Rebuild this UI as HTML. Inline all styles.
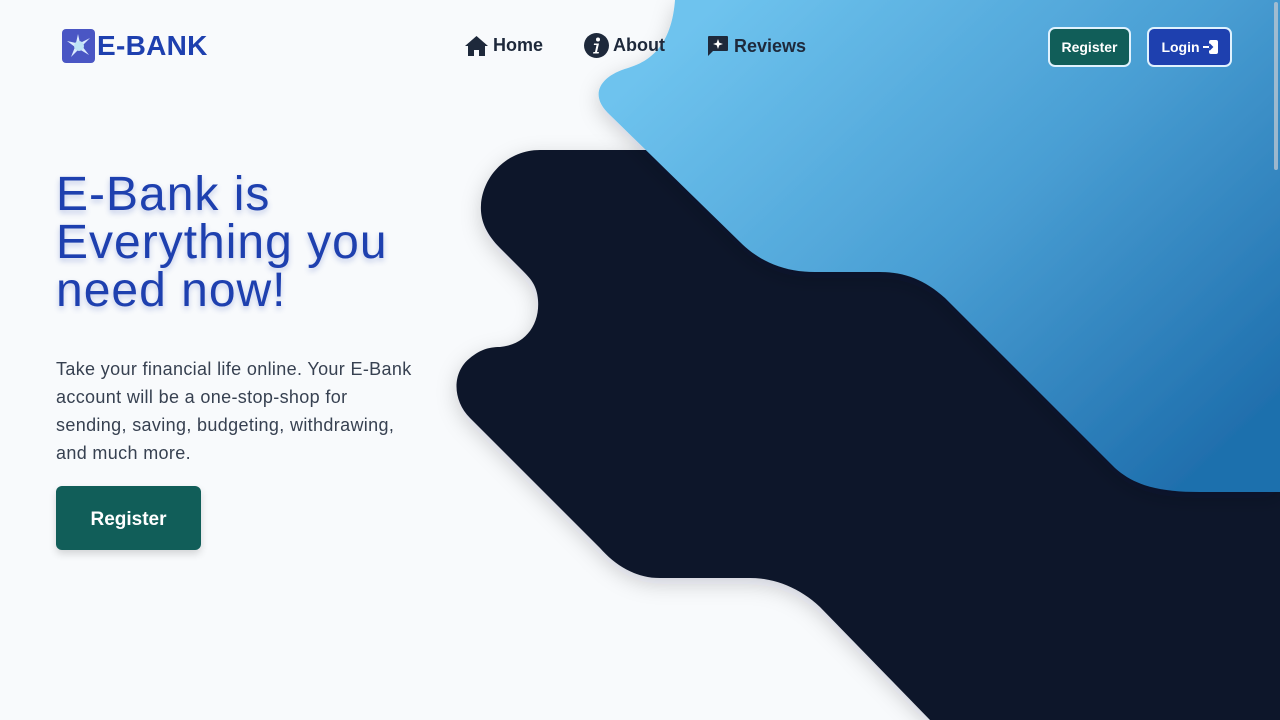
<!DOCTYPE html>
<html><head><meta charset="utf-8"><style>
*{margin:0;padding:0;box-sizing:border-box}
body{width:1280px;height:720px;overflow:hidden;background:#f8fafc;font-family:"Liberation Sans",sans-serif;position:relative}
svg.bg{position:absolute;left:0;top:0}
.logo{position:absolute;left:62px;top:29px;display:flex;align-items:center}
.logo .sq{width:33px;height:34px;background:#4a56c4;border-radius:4px;position:relative}
.logo span{font-weight:bold;font-size:28px;color:#1e40af;margin-left:2px;letter-spacing:0.3px}
.nav{position:absolute;top:35px;display:flex;align-items:center;font-weight:bold;font-size:18px;color:#1e293b}
.nav svg{margin-right:5px}
.btn{position:absolute;top:27px;height:40px;border:2px solid #e0f2fe;border-radius:7px;color:#fff;font-weight:bold;font-size:14px;display:flex;align-items:center;justify-content:center}
h1{position:absolute;left:56px;top:171px;font-weight:normal;font-size:48px;line-height:48px;letter-spacing:1px;color:#1e40af;text-shadow:0 3px 6px rgba(30,64,175,.25)}
p{position:absolute;left:56px;top:355px;width:365px;font-size:18px;line-height:28px;letter-spacing:0.35px;color:#374151}
.reg{position:absolute;left:56px;top:486px;width:145px;height:64px;padding-top:4px;background:#115e59;border-radius:6px;color:#fff;font-weight:bold;font-size:19px;display:flex;align-items:center;justify-content:center;box-shadow:0 4px 8px rgba(0,0,0,.15)}
.scroll{position:absolute;right:2px;top:2px;width:4px;height:168px;background:#c7ccd3;border-radius:2px;opacity:.7}
</style></head><body>
<svg class="bg" width="1280" height="720" viewBox="0 0 1280 720">
<defs>
<linearGradient id="g" x1="0.1" y1="0.1" x2="1" y2="0.8"><stop offset="0" stop-color="#6ec3ee"/><stop offset="0.5" stop-color="#4a9fd4"/><stop offset="1" stop-color="#1f6fad"/></linearGradient>
<filter id="s" x="-20%" y="-20%" width="140%" height="140%"><feDropShadow dx="0" dy="6" stdDeviation="10" flood-color="#0f172a" flood-opacity="0.18"/></filter>
</defs>
<path filter="url(#s)" fill="#0f172a" d="M540 150 L1280 150 L1280 720 L930 720 L820 607 C800 588 775 578 750 578 L660 578 C635 578 615 565 600 548 L470 418 C452 400 452 372 470 358 C480 350 488 347 500 347 C525 345 540 325 538 300 C537 285 530 278 522 270 L500 248 C486 234 480 220 481 205 C483 175 508 150 540 150 Z"/>
<path filter="url(#s)" fill="url(#g)" d="M675 0 C672 40 655 60 628 68 C600 76 588 95 610 115 L740 242 C760 262 785 272 815 272 L880 272 C905 272 925 280 945 298 L1115 468 C1135 486 1160 492 1200 492 L1280 492 L1280 0 Z"/>
</svg>
<div class="scroll"></div>
<div class="logo"><div class="sq"><svg width="33" height="34" viewBox="0 0 33 34"><path d="M16 5 L18 14 L28 9 L20 17 L27 26 L17 20 L9 28 L13 18 L5 12 L14 14 Z" fill="#dbeafe"/><circle cx="17" cy="17" r="5" fill="#bfe3f5"/></svg></div><span>E-BANK</span></div>
<div class="nav" style="left:465px"><svg width="23" height="20" viewBox="0 0 23 20"><path d="M11.5 0 L23 10 L20 10 L20 20 L14 20 L14 14 L9 14 L9 20 L3 20 L3 10 L0 10 Z" fill="#1e293b"/></svg>Home</div>
<div class="nav" style="left:584px;top:33px"><svg width="25" height="25" viewBox="0 0 25 25"><circle cx="12.5" cy="12.5" r="12.5" fill="#1e293b"/><circle cx="14" cy="6.5" r="2" fill="#fff"/><path d="M10 10.5 H15 L13 19 H15 L14.6 20.5 H9 L9.4 19 H11 L12.5 12 H9.8 Z" fill="#fff"/></svg><span style="margin-left:-1px">About</span></div>
<div class="nav" style="left:707px"><svg width="22" height="22" viewBox="0 0 22 22"><path d="M2 1 H20 Q21 1 21 2 V15 Q21 16 20 16 H6 L1 21 V2 Q1 1 2 1 Z" fill="#1e293b"/><path d="M11 4 L12.3 7.7 L16 9 L12.3 10.3 L11 14 L9.7 10.3 L6 9 L9.7 7.7 Z" fill="#fff"/></svg>Reviews</div>
<div class="btn" style="left:1048px;width:83px;background:#115e59">Register</div>
<div class="btn" style="left:1147px;width:85px;background:#1e40af">Login<svg style="margin-left:3px" width="15" height="14" viewBox="0 0 15 14"><rect x="6" y="0" width="9" height="14" rx="2" fill="#fff"/><path d="M0 7 H9 M6 4 L9 7 L6 10" stroke="#1e40af" stroke-width="2" fill="none"/><path d="M0 7 H6" stroke="#fff" stroke-width="2"/></svg></div>
<h1>E-Bank is<br>Everything you<br>need now!</h1>
<p>Take your financial life online. Your E-Bank account will be a one-stop-shop for sending, saving, budgeting, withdrawing, and much more.</p>
<div class="reg">Register</div>
</body></html>
